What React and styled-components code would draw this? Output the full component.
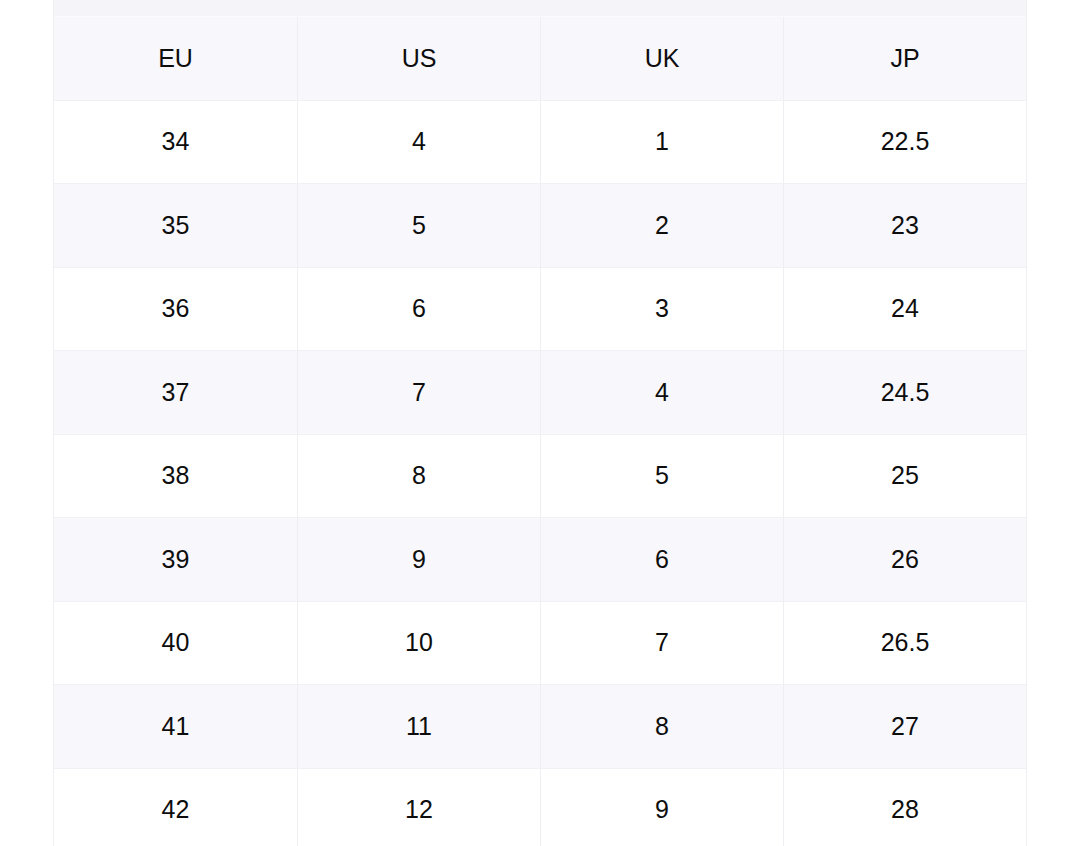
import React from "react";
import styled, { createGlobalStyle } from "styled-components";

const GlobalStyle = createGlobalStyle`
  html, body {
    margin: 0;
    padding: 0;
    background: #ffffff;
    font-family: "Liberation Sans", Arial, sans-serif;
  }
`;

const Page = styled.div`
  padding: 0 55px 0 53px;
  height: 846px;
  overflow: hidden;
`;

const Table = styled.div`
  width: 972px;
  border-left: 1px solid #efeef3;
  border-right: 1px solid #efeef3;
`;

const TopStrip = styled.div`
  height: 16px;
  background: #f5f4f8;
  border-bottom: 1px solid #fbfbfd;
`;

const Row = styled.div`
  display: grid;
  grid-template-columns: repeat(4, 1fr);
  height: 83.5px;
  background: ${(p) => (p.$shaded ? "#f8f7fb" : "#ffffff")};
  border-bottom: 1px solid #f1f0f4;
  box-sizing: border-box;
`;

const Cell = styled.div`
  display: flex;
  align-items: center;
  justify-content: center;
  font-size: 25px;
  color: #0d0d0d;
  border-left: 1px solid #efeef3;
  &:first-child {
    border-left: none;
  }
`;

const header = ["EU", "US", "UK", "JP"];

const sizes = [
  ["34", "4", "1", "22.5"],
  ["35", "5", "2", "23"],
  ["36", "6", "3", "24"],
  ["37", "7", "4", "24.5"],
  ["38", "8", "5", "25"],
  ["39", "9", "6", "26"],
  ["40", "10", "7", "26.5"],
  ["41", "11", "8", "27"],
  ["42", "12", "9", "28"],
];

const App = () => (
  <>
    <GlobalStyle />
    <Page>
      <Table>
        <TopStrip />
        <Row $shaded>
          {header.map((h) => (
            <Cell key={h}>{h}</Cell>
          ))}
        </Row>
        {sizes.map((row, i) => (
          <Row key={row[0]} $shaded={i % 2 === 1}>
            {row.map((v, j) => (
              <Cell key={j}>{v}</Cell>
            ))}
          </Row>
        ))}
      </Table>
    </Page>
  </>
);

export default App;
